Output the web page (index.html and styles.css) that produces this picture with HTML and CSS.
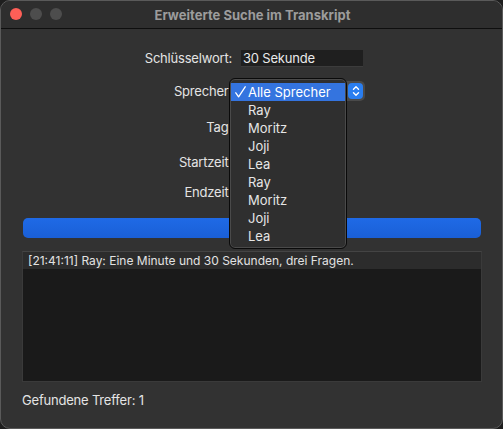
FILE: index.html
```html
<!DOCTYPE html>
<html lang="de">
<head>
<meta charset="utf-8">
<title>Erweiterte Suche im Transkript</title>
<link rel="stylesheet" href="styles.css">
</head>
<body>
<div class="window">
  <div class="titlebar">
    <div class="lights">
      <span class="light red"></span>
      <span class="light gray"></span>
      <span class="light gray"></span>
    </div>
    <div class="title">Erweiterte Suche im Transkript</div>
  </div>
  <div class="content">
    <div class="form">
      <div class="row r1">
        <div class="label">Schlüsselwort:</div>
        <div class="field">30 Sekunde</div>
      </div>
      <div class="row r2">
        <div class="label">Sprecher:</div>
        <div class="popup">
          <span class="popup-text">Alle Sprecher</span>
          <span class="stepper">
            <svg width="14" height="16" viewBox="0 0 14 16"><path d="M4.5 6.2 L7 3.8 L9.5 6.2 M4.5 9.8 L7 12.2 L9.5 9.8" fill="none" stroke="#fff" stroke-width="1.4" stroke-linecap="round" stroke-linejoin="round"/></svg>
          </span>
        </div>
      </div>
      <div class="row r3">
        <div class="label">Tag:</div>
        <div class="ctl"></div>
      </div>
      <div class="row r4">
        <div class="label">Startzeit:</div>
        <div class="ctl"></div>
      </div>
      <div class="row r5">
        <div class="label">Endzeit:</div>
        <div class="ctl"></div>
      </div>
    </div>
    <div class="search-btn"></div>
    <div class="results">
      <div class="result-row">[21:41:11] Ray: Eine Minute und 30 Sekunden, drei Fragen.</div>
    </div>
    <div class="status">Gefundene Treffer: 1</div>
  </div>
  <div class="menu">
    <div class="item selected"><svg class="check" width="11" height="12" viewBox="0 0 11 12"><path d="M0.8 6.8 L3.6 10.8 L10.2 0.8" fill="none" stroke="#fff" stroke-width="1.3" stroke-linecap="round" stroke-linejoin="round"/></svg>Alle Sprecher</div>
    <div class="item">Ray</div>
    <div class="item">Moritz</div>
    <div class="item">Joji</div>
    <div class="item">Lea</div>
    <div class="item">Ray</div>
    <div class="item">Moritz</div>
    <div class="item">Joji</div>
    <div class="item">Lea</div>
  </div>
</div>
</body>
</html>
```
FILE: styles.css
```css
* { box-sizing: border-box; }
html, body {
  margin: 0;
  padding: 0;
  width: 503px;
  height: 429px;
  background: #1e1e1e;
  overflow: hidden;
}
body {
  font-family: Inter, "Liberation Sans", sans-serif;
  font-size: 13px;
  color: #e4e4e4;
}
.window {
  position: relative;
  width: 503px;
  height: 429px;
  background: #323232;
  border: 1px solid #5a5a5a;
  border-radius: 10px;
  overflow: hidden;
}
.titlebar {
  position: relative;
  height: 28px;
  background: #2e2e2e;
  border-bottom: 1px solid #0e0e0e;
  display: flex;
  align-items: center;
  justify-content: center;
}
.lights {
  position: absolute;
  left: 9px;
  top: 7px;
  display: flex;
  gap: 8px;
}
.light {
  width: 12px;
  height: 12px;
  border-radius: 50%;
}
.light.red { background: #fe5f57; }
.light.gray { background: #4d4d4d; }
.title {
  font-weight: 700;
  font-size: 13px;
  color: #9c9c9c;
  margin-left: 2px;
}
.content {
  padding: 0 20px 0 21px;
}
.form {
  display: flex;
  flex-direction: column;
}
.row {
  display: flex;
  align-items: center;
}
.label {
  width: 210px;
  text-align: right;
  white-space: nowrap;
  letter-spacing: -0.2px;
}
.r1 { height: 18px; margin-top: 20px; }
.r2 { height: 20px; margin-top: 14px; }
.r3 { height: 18px; margin-top: 17px; }
.r4 { height: 18px; margin-top: 17px; }
.r5 { height: 18px; margin-top: 12px; }
.field {
  margin-left: 9px;
  width: 122px;
  height: 17px;
  background: #1f1f1f;
  border-bottom: 1px solid #3c3c3c;
  padding-left: 2px;
  line-height: 17px;
  color: #eaeaea;
  letter-spacing: -0.2px;
}
.popup {
  margin-left: 9px;
  width: 124px;
  height: 20px;
  background: #4a4a4a;
  border-radius: 5px;
  display: flex;
  justify-content: flex-end;
  align-items: center;
  padding: 2px;
}
.popup-text { display: none; }
.stepper {
  width: 15px;
  height: 16px;
  border-radius: 4px;
  background: #2a7ef0;
  display: flex;
  align-items: center;
  justify-content: center;
}
.ctl { margin-left: 9px; width: 100px; height: 18px; }
.search-btn {
  margin-top: 17px;
  margin-left: 1px;
  width: 458px;
  height: 20px;
  border-radius: 5px;
  background: linear-gradient(#1f6ae6, #1a5fd6);
}
.results {
  margin-top: 13px;
  width: 460px;
  height: 131px;
  background: #1a1a1a;
  border: 1px solid #3a3a3a;
  border-top-color: #444;
}
.result-row {
  height: 17px;
  background: #2c2c2c;
  padding-left: 5px;
  line-height: 17px;
  color: #e2e2e2;
  white-space: nowrap;
  font-size: 12px;
}
.status {
  margin-top: 10px;
  color: #e4e4e4;
  line-height: 16px;
  letter-spacing: -0.2px;
}
.menu {
  position: absolute;
  left: 228px;
  top: 77px;
  width: 118px;
  height: 171px;
  background: #2f2f2f;
  border: 1px solid #0a0a0a;
  box-shadow: inset 0 0 0 1px #4a4a4a;
  border-radius: 6px;
  padding: 4px 1px;
}
.item {
  height: 18px;
  line-height: 18px;
  padding-left: 17px;
  color: #e6e6e6;
  position: relative;
  font-size: 13px;
}
.item.selected {
  background: #3474df;
  color: #fff;
}
.check {
  position: absolute;
  left: 4px;
  top: 3px;
}
```
